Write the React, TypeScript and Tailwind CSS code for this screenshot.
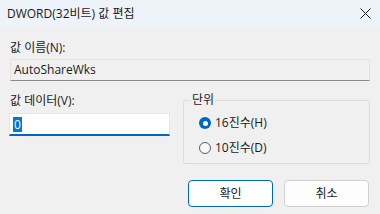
import React from 'react';

const font = { fontFamily: '"Segoe UI", "Open Sans", "Noto Sans CJK KR", sans-serif' };

export default function App() {
  return (
    <div className="w-[380px] h-[214px] bg-[#f0f0f0] text-[12px] text-[#1a1a1a] overflow-hidden flex flex-col" style={font}>
      <div className="h-[27px] bg-[#eef3fa] flex items-center justify-between pl-[7px] pr-[8px] shrink-0">
        <span className="leading-none">DWORD(32비트) 값 편집</span>
        <svg width="11" height="11" viewBox="0 0 11 11" className="mr-[1px]">
          <path d="M0.5 0.5L10.5 10.5M10.5 0.5L0.5 10.5" stroke="#1a1a1a" strokeWidth="1" />
        </svg>
      </div>
      <div className="px-[10px] flex flex-col">
        <div className="mt-[13px] h-[16px] leading-[16px]">값 이름(N):</div>
        <div className="mt-[3px] h-[22px] w-[360px] bg-[#f0f0f0] border border-[#e2e2e2] border-b-[#8a8a8a] flex items-center pl-[3px]">
          AutoShareWks
        </div>
        <div className="flex mt-[11px]">
          <div className="w-[161px] -ml-[1px] flex flex-col">
            <div className="h-[16px] leading-[16px] ml-[1px] mt-[1px]">값 데이터(V):</div>
            <div className="mt-[4px] h-[23px] bg-white border border-[#e6e6e6] border-b-2 border-b-[#0067c0] flex items-center pl-[3px]">
              <span className="bg-[#0078d7] text-white px-[1px] leading-[15px]">0</span>
            </div>
          </div>
          <div className="relative ml-[13px] mt-[8px] w-[187px] h-[64px] border border-[#dcdcdc] rounded-[2px]">
            <span className="absolute -top-[9px] left-[7px] bg-[#f0f0f0] px-[1px] leading-[16px]">단위</span>
            <div className="flex flex-col pl-[15px] pt-[14px] gap-[9px]">
              <label className="flex items-center gap-[4px] h-[16px]">
                <span className="w-[12px] h-[12px] rounded-full bg-[#0067c0] flex items-center justify-center">
                  <span className="w-[5px] h-[5px] rounded-full bg-white" />
                </span>
                <span>16진수(H)</span>
              </label>
              <label className="flex items-center gap-[4px] h-[16px]">
                <span className="w-[12px] h-[12px] rounded-full border border-[#5c5c5c] bg-[#f7f7f7]" />
                <span>10진수(D)</span>
              </label>
            </div>
          </div>
        </div>
        <div className="flex justify-end gap-[11px] mt-[16px] pr-[1px]">
          <button className="w-[85px] h-[27px] bg-white border border-[#0067c0] rounded-[4px] text-[12px]">확인</button>
          <button className="w-[85px] h-[27px] bg-[#fdfdfd] border border-[#d0d0d0] rounded-[4px] text-[12px]">취소</button>
        </div>
      </div>
    </div>
  );
}
